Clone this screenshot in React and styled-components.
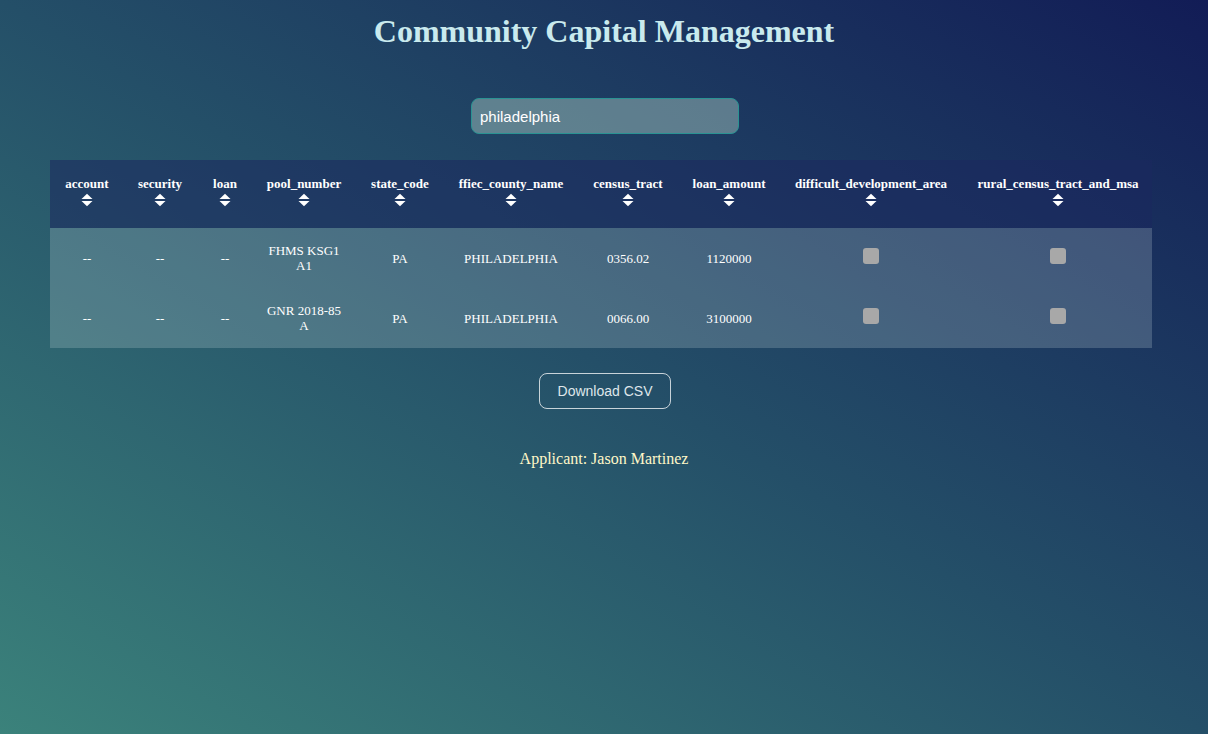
import React from "react";
import styled, { createGlobalStyle } from "styled-components";

const Global = createGlobalStyle`
  html, body { margin: 0; padding: 0; height: 100%; }
  body {
    min-height: 734px;
    background: linear-gradient(to top right, #3b827b 0%, #244f68 50%, #121c56 100%);
    font-family: "Liberation Serif", "Times New Roman", serif;
  }
  #root { min-height: 734px; }
`;

const Page = styled.div`
  display: flex;
  flex-direction: column;
  align-items: center;
  padding: 13px 50px 40px;
`;

const Title = styled.h1`
  margin: 0;
  font-size: 32px;
  line-height: 37px;
  font-weight: bold;
  color: #c9eaee;
`;

const Search = styled.input`
  margin-top: 48px;
  margin-left: 2px;
  width: 268px;
  height: 36px;
  box-sizing: border-box;
  border-radius: 8px;
  border: 1px solid #2a9393;
  background: rgba(200, 235, 215, 0.38);
  color: #fff;
  font-family: "Liberation Sans", Arial, sans-serif;
  font-size: 15px;
  padding: 0 8px;
  outline: none;
`;

const Table = styled.table`
  align-self: flex-start;
  margin-top: 26px;
  width: 1102px;
  table-layout: fixed;
  border-collapse: collapse;
  color: #fff;
  font-size: 13px;
`;

const HeadRow = styled.tr`
  background: rgba(28, 40, 95, 0.55);
  height: 68px;
`;

const Th = styled.th`
  width: ${(p) => p.$w - 24}px;
  padding: 0 12px 6px;
  font-weight: bold;
  vertical-align: middle;
  text-align: center;
  white-space: nowrap;
`;

const HeadLabel = styled.div`
  line-height: 15px;
`;

const SortIcon = styled.svg`
  display: block;
  margin: 2px auto 0;
`;

const BodyRow = styled.tr`
  background: rgba(225, 240, 240, 0.2);
  height: 60px;
`;

const Td = styled.td`
  text-align: center;
  vertical-align: middle;
  padding: 0 12px;
  line-height: 15px;
`;

const Check = styled.span`
  display: block;
  width: 16px;
  height: 16px;
  border-radius: 3px;
  background: #a8a8a8;
  margin: -4px auto 0;
`;

const Button = styled.button`
  margin-top: 25px;
  margin-left: 2px;
  width: 132px;
  height: 36px;
  border-radius: 8px;
  border: 1px solid rgba(255, 255, 255, 0.75);
  background: transparent;
  color: #dfe6ea;
  font-family: "Liberation Sans", Arial, sans-serif;
  font-size: 14px;
  cursor: pointer;
`;

const Applicant = styled.p`
  margin: 41px 0 0;
  font-size: 16px;
  line-height: 18px;
  color: #fff8c8;
`;

const columns = [
  ["account", 74],
  ["security", 72],
  ["loan", 58],
  ["pool_number", 100],
  ["state_code", 92],
  ["ffiec_county_name", 130],
  ["census_tract", 104],
  ["loan_amount", 98],
  ["difficult_development_area", 186],
  ["rural_census_tract_and_msa", 188],
];

const rows = [
  ["--", "--", "--", "FHMS KSG1 A1", "PA", "PHILADELPHIA", "0356.02", "1120000"],
  ["--", "--", "--", "GNR 2018-85 A", "PA", "PHILADELPHIA", "0066.00", "3100000"],
];

const Sort = () => (
  <SortIcon width="12" height="14" viewBox="0 0 12 14">
    <path d="M0.5 6 L6 0.8 L11.5 6 Z" fill="#fff" />
    <path d="M0.5 8 L11.5 8 L6 13.2 Z" fill="#fff" />
  </SortIcon>
);

export default function App() {
  return (
    <>
      <Global />
      <Page>
        <Title>Community Capital Management</Title>
        <Search defaultValue="philadelphia" />
        <Table>
          <thead>
            <HeadRow>
              {columns.map(([name, w]) => (
                <Th key={name} $w={w}>
                  <HeadLabel>{name}</HeadLabel>
                  <Sort />
                </Th>
              ))}
            </HeadRow>
          </thead>
          <tbody>
            {rows.map((r, i) => (
              <BodyRow key={i}>
                {r.map((c, j) => (
                  <Td key={j}>{c}</Td>
                ))}
                <Td>
                  <Check />
                </Td>
                <Td>
                  <Check />
                </Td>
              </BodyRow>
            ))}
          </tbody>
        </Table>
        <Button>Download CSV</Button>
        <Applicant>Applicant: Jason Martinez</Applicant>
      </Page>
    </>
  );
}
